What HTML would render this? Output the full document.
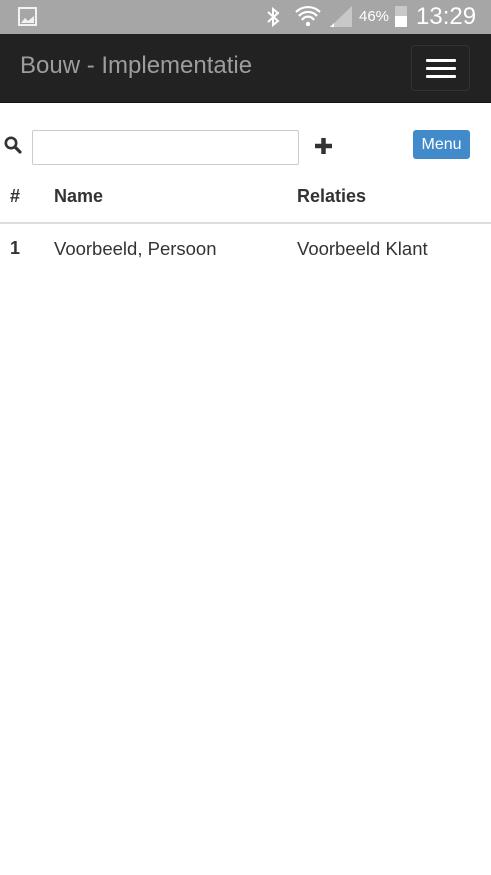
<!DOCTYPE html>
<html><head><style>
*{margin:0;padding:0;box-sizing:border-box}
body{width:491px;height:875px;background:#fff;font-family:"Liberation Sans",Arial,sans-serif;position:relative;overflow:hidden;color:#333}
.sb{position:absolute;left:0;top:0;width:491px;height:34px;background:#a6a6a6;color:#fff}
.nav{position:absolute;left:0;top:34px;width:491px;height:69px;background:#222;border-bottom:1px solid #111}
.a{position:absolute}
</style></head><body>
<div class="sb">
 <div class="a" style="left:18px;top:7px;width:19px;height:19px;border:2px solid #f2f2f2;background:#a6a6a6"><svg class="a" style="left:1px;top:6px" width="13" height="8"><path d="M0 8 L4 3 L7 6 L13 1 L13 8Z" fill="#f2f2f2"/></svg></div>
 <svg class="a" style="left:265px;top:7px" width="16" height="20"><path d="M3 5 L13 14 L8 18 L8 2 L13 6 L3 15" stroke="#fff" stroke-width="2" fill="none"/></svg>
 <svg class="a" style="left:295px;top:4px" width="26" height="24"><path d="M1 8 A17 17 0 0 1 25 8 M4 12 A12 12 0 0 1 22 12 M7 16 A7 7 0 0 1 19 16" stroke="#fff" stroke-width="2.2" fill="none"/><circle cx="13" cy="20" r="2.2" fill="#fff"/></svg>
 <svg class="a" style="left:330px;top:6px" width="22" height="21"><path d="M0 21 L22 0 L22 21Z" fill="#c8c8c8"/><path d="M0 21 L4 17 L4 21Z" fill="#fff"/></svg>
 <div class="a" style="left:359px;top:8px;font-size:15px;color:#fff">46%</div>
 <div class="a" style="left:395px;top:6px;width:12px;height:21px;background:#c8c8c8"><div style="position:absolute;bottom:0;left:0;width:12px;height:11px;background:#fff"></div></div>
 <div class="a" style="left:416px;top:3px;font-size:24px;color:#fff">13:29</div>
</div>
<div class="nav">
 <div class="a" style="left:20px;top:18px;font-size:24px;color:#9d9d9d">Bouw - Implementatie</div>
 <div class="a" style="left:411px;top:11px;width:59px;height:46px;border:1px solid #333;border-radius:4px">
  <div class="a" style="left:14px;top:13px;width:30px;height:3px;background:#fff;border-radius:1px"></div>
  <div class="a" style="left:14px;top:21px;width:30px;height:3px;background:#fff;border-radius:1px"></div>
  <div class="a" style="left:14px;top:29px;width:30px;height:3px;background:#fff;border-radius:1px"></div>
 </div>
</div>
<svg class="a" style="left:4px;top:136px" width="18" height="18"><circle cx="7" cy="7" r="5.2" stroke="#333" stroke-width="2.6" fill="none"/><path d="M11 11 L16 16" stroke="#333" stroke-width="3.2" stroke-linecap="round"/></svg>
<div class="a" style="left:32px;top:130px;width:267px;height:35px;border:1px solid #ccc;border-radius:2px"></div>
<svg class="a" style="left:314px;top:137px" width="19" height="18"><path d="M9.5 1 V17 M1 9 H18" stroke="#333" stroke-width="4.5"/></svg>
<div class="a" style="left:413px;top:130px;width:57px;height:29px;background:#428bca;border-radius:3px;color:#fff;font-size:16px;text-align:center;line-height:29px">Menu</div>
<div class="a" style="left:10px;top:186px;font-size:18px;font-weight:bold">#</div>
<div class="a" style="left:54px;top:186px;font-size:18px;font-weight:bold">Name</div>
<div class="a" style="left:297px;top:186px;font-size:18px;font-weight:bold">Relaties</div>
<div class="a" style="left:0;top:222px;width:491px;height:2px;background:#ddd"></div>
<div class="a" style="left:10px;top:238px;font-size:18px;font-weight:bold">1</div>
<div class="a" style="left:54px;top:238px;font-size:18.5px">Voorbeeld, Persoon</div>
<div class="a" style="left:297px;top:238px;font-size:18.5px">Voorbeeld Klant</div>
</body></html>
